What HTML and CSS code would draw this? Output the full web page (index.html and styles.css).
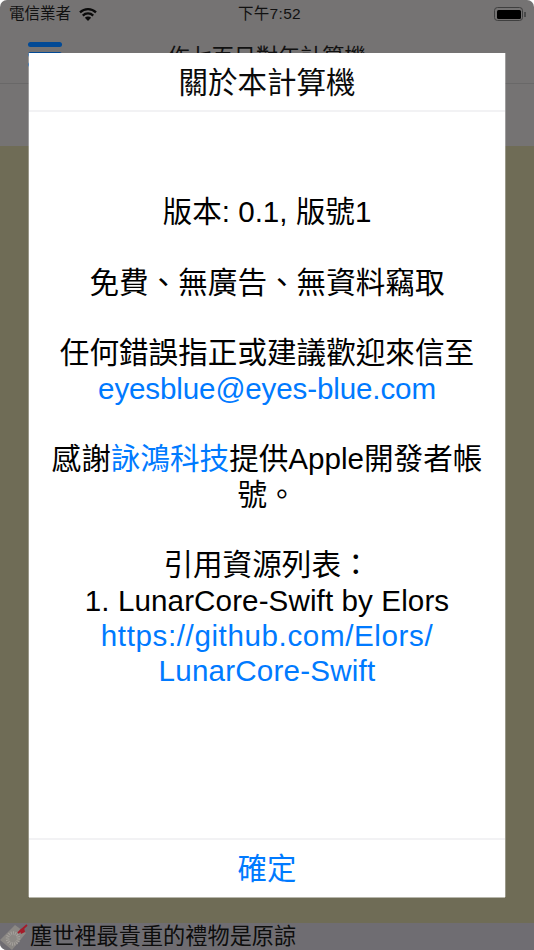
FILE: index.html
```html
<!DOCTYPE html>
<html lang="zh-Hant">
<head>
<meta charset="utf-8">
<title>關於本計算機</title>
<link rel="stylesheet" href="styles.css">
</head>
<body>
<div class="screen">
  <header class="top">
    <div class="status">
      <div class="status-left">
        <span class="carrier">電信業者</span>
        <svg class="wifi" viewBox="0 0 18 13" width="18" height="13"><path d="M9 13 5.9 9.7a4.4 4.4 0 0 1 6.2 0Z" fill="#0a0a0a"/><path d="M3.8 7.6a7.4 7.4 0 0 1 10.4 0" fill="none" stroke="#0a0a0a" stroke-width="2.3"/><path d="M1 4.4a11.6 11.6 0 0 1 16 0" fill="none" stroke="#0a0a0a" stroke-width="2.3"/></svg>
      </div>
      <span class="clock">下午7:52</span>
      <div class="battery"><span class="battery-fill"></span><span class="battery-cap"></span></div>
    </div>
    <div class="nav">
      <div class="burger"><span></span><span></span><span></span></div>
      <div class="nav-title">作七百日對年計算機</div>
    </div>
  </header>
  <div class="band"></div>
  <main class="olive"></main>
  <footer class="ticker">
    <svg class="tag" viewBox="0 0 30 27" width="30" height="27">
      <path d="M15 2 26 10 12 27 0 17Z" fill="#8b8884"/>
      <circle cx="13" cy="15.5" r="5.5" fill="none" stroke="#a5a19c" stroke-width="3.5" stroke-dasharray="1 1.1"/>
      <path d="M18 10 27 2" stroke="#a51c2a" stroke-width="1.8"/>
      <path d="M19.5 7 24 4.5 25 9 21 11Z" fill="#a51c2a"/>
    </svg>
    <span class="ticker-text">塵世裡最貴重的禮物是原諒</span>
  </footer>

  <section class="dialog">
    <h1 class="dialog-title">關於本計算機</h1>
    <div class="dialog-body">
      <p>版本: 0.1, 版號1</p>
      <p>免費、無廣告、無資料竊取</p>
      <p>任何錯誤指正或建議歡迎來信至<br><a class="mail">eyesblue@eyes-blue.com</a></p>
      <p>感謝<a>詠鴻科技</a>提供Apple開發者帳號。</p>
      <p>引用資源列表：<br><span class="ref">1. LunarCore-Swift by Elors</span><br><a class="url">https://github.com/Elors/</a><br><a class="repo">LunarCore-Swift</a></p>
    </div>
    <div class="dialog-action"><a>確定</a></div>
  </section>
</div>
</body>
</html>
```
FILE: styles.css
```css
* { box-sizing: border-box; }
html, body { margin: 0; padding: 0; background: #fff; }
body { width: 534px; height: 950px; overflow: hidden; font-family: "Liberation Sans", "Noto Sans CJK TC", sans-serif; color: #000; }
.screen { position: relative; width: 534px; height: 950px; display: flex; flex-direction: column; overflow: hidden; border-radius: 7px 7px 0 7px; background: #757373; }
.top { height: 84px; border-bottom: 1px solid #696868; flex: none; }
.status { height: 28px; display: flex; align-items: center; justify-content: space-between; padding: 0 11px 0 9px; position: relative; color: #111; }
.status-left { display: flex; align-items: center; gap: 8px; }
.carrier { font-size: 15.5px; line-height: 28px; }
.wifi { display: block; }
.clock { position: absolute; left: 238px; font-size: 15.5px; line-height: 28px; letter-spacing: .3px; }
.battery { width: 29px; height: 14px; border: 1px solid #3f3f3f; border-radius: 3.5px; padding: 1.5px; position: relative; }
.battery-fill { display: block; height: 100%; background: #000; border-radius: 1.5px; }
.battery-cap { position: absolute; right: -3.5px; top: 3.5px; width: 1.5px; height: 5px; background: #4a4a4a; }
.nav { height: 55px; position: relative; display: flex; justify-content: center; }
.burger { position: absolute; left: 28px; top: 14px; width: 34px; display: flex; flex-direction: column; gap: 5px; }
.burger span { height: 5px; border-radius: 2.5px; background: #024a96; }
.nav-title { font-size: 22.1px; line-height: 30px; margin-top: 14px; color: #111; }
.band { height: 62px; flex: none; background: #757373; }
.olive { flex: 1; background: #6f6c56; }
.ticker { height: 27px; flex: none; background: #6f6d72; display: flex; align-items: center; }
.tag { display: block; flex: none; }
.ticker-text { font-size: 22.2px; line-height: 27px; color: #0d0d0d; }
.dialog { position: absolute; left: 29px; top: 53px; width: 476px; height: 843.5px; background: #fff; display: flex; flex-direction: column; text-align: center; box-shadow: -1px 0 0 rgba(255,255,255,.3), 1px 0 0 rgba(255,255,255,.3), 0 1px 0 rgba(255,255,255,.5); }
.dialog-title { margin: 0; height: 59px; flex: none; font-size: 29.5px; font-weight: 400; line-height: 59px; border-bottom: 2px solid #f2f2f4; color: #0a0a0a; }
.dialog-body { flex: 1; padding: 82px 18px 0; font-size: 29.6px; line-height: 35.33px; color: #000; }
.dialog-body p { margin: 0 0 35.33px; }
.mail { letter-spacing: -.14px; }
.ref { letter-spacing: .1px; }
.url { letter-spacing: .6px; }
.repo { letter-spacing: .2px; }
a { color: #007aff; }
.dialog-action { height: 59px; flex: none; border-top: 2px solid #f2f2f4; font-size: 29.4px; line-height: 57px; }
```
